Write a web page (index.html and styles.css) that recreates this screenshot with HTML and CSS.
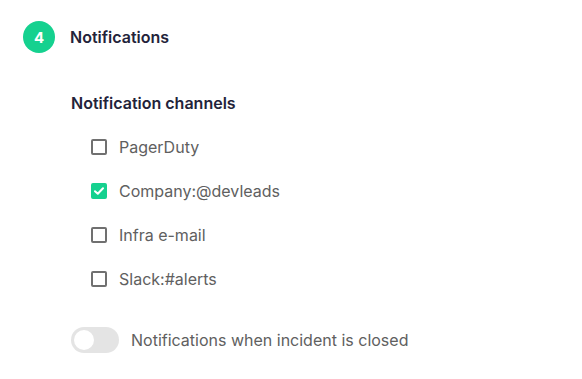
FILE: index.html
```html
<!DOCTYPE html>
<html lang="en">
<head>
    <meta charset="UTF-8">
    <meta name="viewport" content="width=device-width, initial-scale=1.0">
    <title>Notifications</title>
    <link rel="stylesheet" href="styles.css">
</head>
<body>
    <div class="step">
        <div class="step-header">
            <div class="step-number">4</div>
            <h2>Notifications</h2>
        </div>
        <div class="step-body">
            <h3>Notification channels</h3>
            <ul class="channels">
                <li><span class="box"></span>PagerDuty</li>
                <li><span class="box checked"><svg width="10" height="8" viewBox="0 0 10 8"><path d="M1 4.2 L3.8 6.8 L9 1.2" fill="none" stroke="white" stroke-width="2" stroke-linecap="round" stroke-linejoin="round"/></svg></span>Company:@devleads</li>
                <li><span class="box"></span>Infra e-mail</li>
                <li><span class="box"></span>Slack:#alerts</li>
            </ul>
            <div class="toggle-row">
                <span class="toggle"><span class="knob"></span></span>
                Notifications when incident is closed
            </div>
        </div>
    </div>
</body>
</html>
```

FILE: styles.css
```css
body {
    margin: 0;
    font-family: Inter, "Noto Sans", sans-serif;
    background: white;
}

.step {
    padding: 21px 23px;
}

.step-header {
    display: flex;
    align-items: center;
    gap: 15px;
}

.step-number {
    width: 32px;
    height: 32px;
    border-radius: 50%;
    background: #15d18f;
    color: white;
    font-size: 15px;
    font-weight: 700;
    display: flex;
    align-items: center;
    justify-content: center;
}

.step-header h2 {
    margin: 0;
    font-size: 16px;
    font-weight: 600;
    color: #23233a;
}

.step-body {
    padding-left: 48px;
    padding-top: 40px;
}

.step-body h3 {
    margin: 0;
    font-size: 16px;
    font-weight: 600;
    color: #23233a;
}

.channels {
    list-style-type: none;
    padding: 0 0 0 20px;
    margin: 12px 0 0;
}

.channels li {
    display: flex;
    align-items: center;
    gap: 12px;
    height: 44px;
    font-size: 16px;
    color: #606060;
}

.box {
    width: 12px;
    height: 12px;
    border: 2px solid #707070;
    border-radius: 2px;
    display: flex;
    align-items: center;
    justify-content: center;
}

.box.checked {
    background: #15d18f;
    border-color: #15d18f;
}

.toggle-row {
    display: flex;
    align-items: center;
    gap: 12px;
    margin-top: 26px;
    font-size: 16px;
    color: #606060;
}

.toggle {
    width: 48px;
    height: 26px;
    border-radius: 13px;
    background: #e4e4e4;
    display: flex;
    align-items: center;
    padding: 0 3px;
    box-sizing: border-box;
}

.knob {
    width: 20px;
    height: 20px;
    border-radius: 50%;
    background: white;
}
```
